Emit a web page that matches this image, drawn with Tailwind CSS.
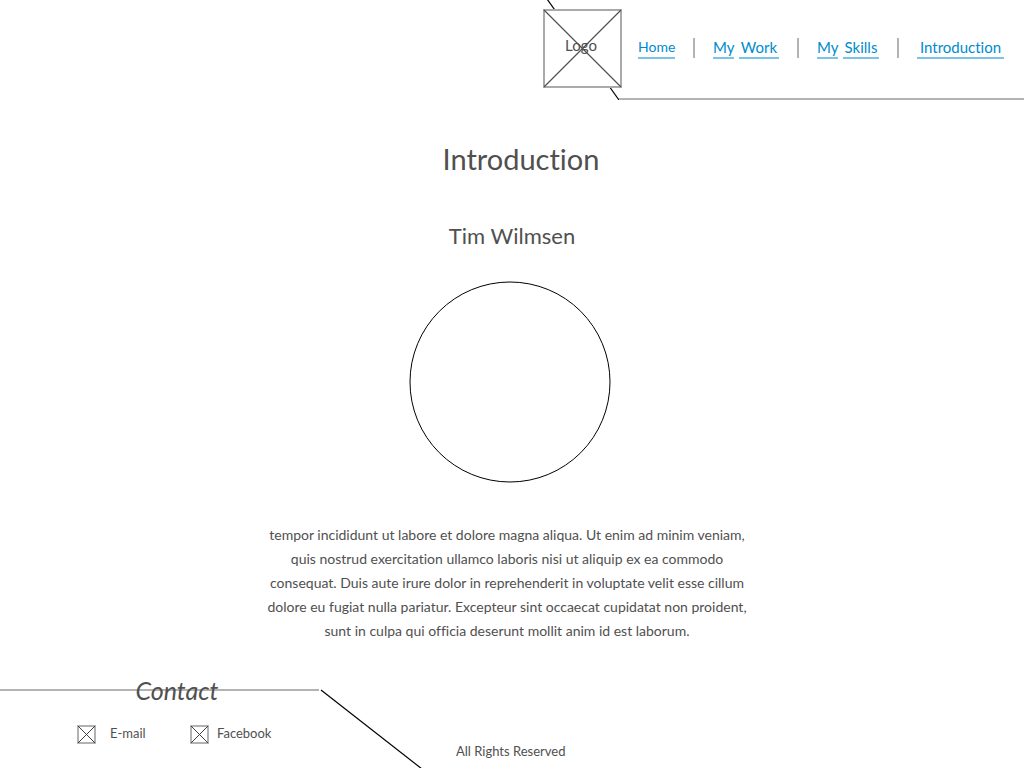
<!DOCTYPE html>
<html lang="en">
<head>
<meta charset="utf-8">
<meta name="viewport" content="width=device-width, initial-scale=1">
<title>Introduction</title>
<script src="https://cdn.jsdelivr.net/npm/@tailwindcss/browser@4"></script>
</head>
<body class="flex min-h-screen flex-col overflow-x-hidden bg-white font-['Lato',sans-serif] text-[#505050] [font-variant-ligatures:none]">
  <header class="flex justify-end">
    <svg class="h-[100px] w-[79px] shrink-0" viewBox="0 0 79 100" role="img" aria-label="Logo">
      <path d="M4 -1L76 100" stroke="#000" stroke-width="1.2"/>
      <rect x="1" y="10" width="77" height="77" fill="#fff" stroke="#aaa" stroke-width="2"/>
      <path d="M1 10L78 87M78 10L1 87" stroke="#505050" stroke-width="1.2"/>
      <text x="38" y="51" text-anchor="middle" font-size="15" fill="#505050">Logo</text>
    </svg>
    <nav class="-ml-[3px] flex h-[100px] items-center border-b-2 border-[#b3b3b3] pr-5 pb-[2px] pl-[19px] text-[15px] leading-5 whitespace-nowrap text-[#008bcc]">
      <a href="#home" class="flex justify-center"><span class="w-[37px] border-b-2 border-[#7cc4e6] text-center text-[14px] leading-5">Home</span></a>
      <span class="mx-[18px] h-5 w-[2px] bg-[#b3b3b3]"></span>
      <a href="#work" class="flex gap-[5px]"><span class="w-[21px] border-b-2 border-[#7cc4e6]">My</span> <span class="w-10 border-b-2 border-[#7cc4e6] text-center">Work</span></a>
      <span class="mx-[18px] h-5 w-[2px] bg-[#b3b3b3]"></span>
      <a href="#skills" class="flex gap-[5px]"><span class="w-[21px] border-b-2 border-[#7cc4e6]">My</span> <span class="w-9 border-b-2 border-[#7cc4e6] text-center">Skills</span></a>
      <span class="mx-[18px] h-5 w-[2px] bg-[#b3b3b3]"></span>
      <a href="#introduction" class="flex"><span class="w-[87px] border-b-2 border-[#7cc4e6] text-center">Introduction</span></a>
    </nav>
  </header>
  <main class="flex flex-1 flex-col items-center">
    <h1 class="mt-[39px] pl-[18px] text-[29px] leading-10">Introduction</h1>
    <h2 class="mt-[41px] text-[22px] leading-8">Tim Wilmsen</h2>
    <svg class="mt-[29px] mr-1 h-[202px] w-[202px]" viewBox="0 0 202 202" role="img" aria-label="Portrait">
      <circle cx="101" cy="101" r="100" fill="none" stroke="#000"/>
    </svg>
    <div class="mt-10 w-[500px] max-w-full overflow-hidden">
      <p class="-ml-[10px] text-center text-[14px] leading-6 whitespace-nowrap">tempor incididunt ut labore et dolore magna aliqua. Ut enim ad minim veniam,<br>quis nostrud exercitation ullamco laboris nisi ut aliquip ex ea commodo<br>consequat. Duis aute irure dolor in reprehenderit in voluptate velit esse cillum<br>dolore eu fugiat nulla pariatur. Excepteur sint occaecat cupidatat non proident,<br>sunt in culpa qui officia deserunt mollit anim id est laborum.</p>
    </div>
  </main>
  <footer class="flex h-[79px] items-start">
    <section class="w-[319px] border-t-2 border-[#b3b3b3]">
      <h2 class="-mt-[17px] pl-[35px] text-center text-[25px] leading-8 italic">Contact</h2>
      <div class="mt-4 flex h-6 items-center pl-[77px] text-[13px]">
        <a href="#email" class="flex w-[113px] items-center gap-[14px] whitespace-nowrap">
          <svg class="h-[19px] w-[19px] shrink-0" viewBox="0 0 19 19" fill="none"><rect x="1" y="1" width="17" height="17" stroke="#aaa" stroke-width="1.8"/><path d="M1 1L18 18M18 1L1 18" stroke="#404040"/></svg>E-mail</a>
        <a href="#facebook" class="flex items-center gap-2 whitespace-nowrap">
          <svg class="h-[19px] w-[19px] shrink-0" viewBox="0 0 19 19" fill="none"><rect x="1" y="1" width="17" height="17" stroke="#aaa" stroke-width="1.8"/><path d="M1 1L18 18M18 1L1 18" stroke="#404040"/></svg>Facebook</a>
      </div>
    </section>
    <svg class="h-[79px] w-[104px] shrink-0" viewBox="0 0 104 79" aria-hidden="true"><path d="M2 1L103 80" stroke="#000" stroke-width="1.2"/></svg>
    <p class="mt-[52px] ml-[33px] text-[13px] leading-5 whitespace-nowrap">All Rights Reserved</p>
  </footer>
</body>
</html>
